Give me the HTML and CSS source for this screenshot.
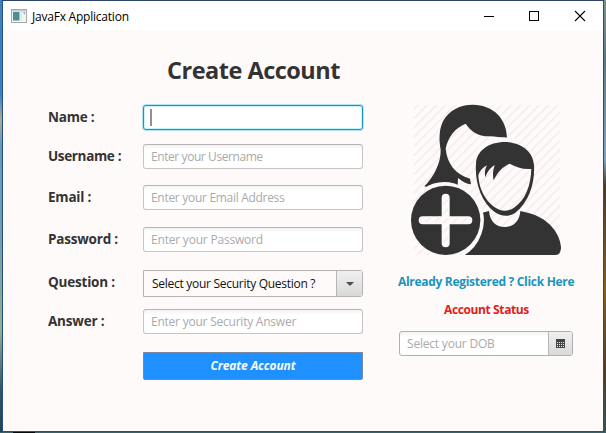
FILE: index.html
```html
<!DOCTYPE html>
<html lang="en">
<head>
<meta charset="utf-8">
<title>JavaFx Application</title>
<link rel="stylesheet" href="styles.css">
</head>
<body>
<div class="window">
  <header class="titlebar">
    <svg class="app-icon" width="16" height="14" viewBox="0 0 16 14">
      <rect x=".5" y=".5" width="15" height="13" fill="#f4f6f6" stroke="#a3abab"/>
      <rect x="1" y="1" width="14" height="1.5" fill="#c3cbcb"/>
      <rect x="2" y="3" width="6.500" height="8.500" fill="#4b8f92"/>
      <rect x="9.500" y="3" width="2" height="8.500" fill="#dfe7e7"/>
      <path d="M12 3h2v3z" fill="#9aa6a8"/>
    </svg>
    <span class="caption">JavaFx Application</span>
    <svg class="controls" width="104" height="12" viewBox="0 0 104 12">
      <path d="M0 6.500h10M45.500 1.500h9v9h-9z" fill="none" stroke="#000" shape-rendering="crispEdges"/>
      <path d="M91 1l10 10M101 1L91 11" fill="none" stroke="#000" stroke-width="1.100"/>
    </svg>
  </header>
  <main class="content">
    <form class="form">
      <h1 class="title">Create Account</h1>
      <div class="row name"><label>Name :</label><div class="field focused"><i class="caret"></i></div></div>
      <div class="row username"><label class="tight">Username :</label><div class="field"><span>Enter your Username</span></div></div>
      <div class="row email"><label>Email :</label><div class="field"><span>Enter your Email Address</span></div></div>
      <div class="row password"><label>Password :</label><div class="field"><span>Enter your Password</span></div></div>
      <div class="row question"><label>Question :</label><div class="combo"><span class="combo-text">Select your Security Question ?</span><div class="combo-arrow"><svg width="8" height="4" viewBox="0 0 8 4"><path d="M0 0h8L4 4z" fill="#4c4c4c"/></svg></div></div></div>
      <div class="row answer"><label>Answer :</label><div class="field"><span>Enter your Security Answer</span></div></div>
      <button class="submit" type="button">Create Account</button>
    </form>
    <aside class="side">
      <svg class="avatar" width="170" height="170" viewBox="0 0 510 510">
        <defs>
          <pattern id="hatch" width="28" height="28" patternUnits="userSpaceOnUse">
            <path d="M-7 35L35-7M-7 7L7-7M21 35L35 21" stroke="#f5eded" stroke-width="5"/>
          </pattern>
        </defs>
        <rect x="42" y="30" width="438" height="450" fill="url(#hatch)"/>
        <path fill="#333" d="M73 274C101 245 123 205 122 164C116 132 118 101 129 79C146 46 181 29 218 29C281 30 321 72 321 131C302 127 286 124 270 124C236 125 213 110 197 86C166 97 143 128 137 161C141 205 166 238 210 251L213 268C200 268 188 260 174 249L173 273C134 260 108 269 83 277Z"/>
        <path d="M230 175C246 145 277 131 315 132C330 132 343 135 355 140" fill="none" stroke="#fffafa" stroke-width="10"/>
        <path fill="#333" d="M180 480C216 464 244 421 247 381L244 354L267 348C270 380 288 396 314 396C341 396 359 378 361 348L386 354C438 367 479 408 483 456C483 471 477 480 467 480Z"/>
        <path fill="#333" fill-rule="evenodd" d="M228 207C229 168 265 141 315 141C367 142 400 172 402 210C405 260 390 320 345 354C324 367 302 363 283 350C243 320 224 261 228 207ZM235 240C237 289 264 331 300 345C314 350 328 347 342 338C378 314 392 270 394 222C369 224 347 216 329 206C311 213 292 231 281 256C278 242 278 229 284 211C272 217 262 230 256 247C253 233 255 222 261 211C249 217 239 228 235 240Z"/>
        <path d="M74 283C128 247 203 268 234 324C266 383 238 454 180 484" fill="none" stroke="#fffafa" stroke-width="8"/>
        <circle cx="137" cy="376" r="104" fill="#333"/>
        <path d="M137 308V445M68 376H205" fill="none" stroke="#fffafa" stroke-width="24" stroke-linecap="round"/>
        <path d="M129 329l16-16M129 357l16-16M77 381l16-16M105 381l16-16M129 385l16-16M157 385l16-16M185 385l16-16M129 413l16-16M129 441l16-16" stroke="#f5eded" stroke-width="5"/>
      </svg>
      <a class="login">Already Registered ? Click Here</a>
      <div class="status">Account Status</div>
      <div class="date">
        <span>Select your DOB</span>
        <div class="date-button"><svg width="9" height="9" viewBox="0 0 9 9"><path d="M0 0h9v9H0z" fill="#444"/><path d="M1 3h1v1H1zM3 3h1v1H3zM5 3h1v1H5zM7 3h1v1H7zM1 5h1v1H1zM3 5h1v1H3zM5 5h1v1H5zM7 5h1v1H7zM1 7h1v1H1zM3 7h1v1H3zM5 7h1v1H5zM7 7h1v1H7z" fill="#eee"/></svg></div>
      </div>
    </aside>
  </main>
</div>
</body>
</html>
```
FILE: styles.css
```css
* { box-sizing: border-box; }
body {
  margin: 0;
  height: 433px;
  padding: 0 2px;
  overflow: hidden;
  font-family: "Open Sans", "Noto Sans", sans-serif;
  font-size: 12px;
  background:
    linear-gradient(90deg, #3b606a 0 13px, #050a0c 13px 35px, #3b606a 35px) 0 100% / 100% 1px no-repeat,
    linear-gradient(#3f81c0 0 95px, #a9a9a3 120px, #6998bd 145px, #789bb0 240px, #93ad9d 330px, #365366 390px, #244052) 0 0 / 2px 100% no-repeat,
    linear-gradient(#7b9584 0, #557c88 60px, #78a8d0 160px, #493c28 185px, #8b5c1c 290px, #523d24 370px, #36545a) 100% 0 / 2px 100% no-repeat;
}
.window {
  height: 432px;
  border: 1px solid #23507e;
  border-top-color: #2b4169;
  background: #fffafa;
}
.titlebar {
  display: flex;
  align-items: center;
  height: 30px;
  padding: 0 15px 0 8px;
  background: #fff;
}
.app-icon { margin-top: -1px; }
.caption { margin-left: 5px; color: #000; font-size: 12px; letter-spacing: -.22px; white-space: nowrap; }
.controls { margin: -1px 0 0 auto; }
.content { display: flex; }
.form { width: 360px; padding-left: 45px; }
.title {
  height: 74px;
  margin: 0;
  padding: 22px 0 0 119px;
  line-height: 34px;
  font-size: 23.5px;
  font-weight: 700;
  letter-spacing: -.5px;
  color: #333;
  white-space: nowrap;
}
.row { display: flex; align-items: center; height: 25px; }
.row label {
  width: 95px;
  flex: none;
  margin-top: -1px;
  color: #333;
  font-size: 13.5px;
  font-weight: 700;
  letter-spacing: -.2px;
  white-space: nowrap;
}
.row .tight { letter-spacing: -.35px; }
.name { margin-bottom: 14px; }
.username { margin-bottom: 16px; }
.email { margin-bottom: 17px; }
.password { margin-bottom: 18px; }
.question { height: 27px; margin-bottom: 12px; }
.question label { margin-top: -3px; }
.answer { margin-bottom: 18px; }
.field, .date {
  display: flex;
  align-items: center;
  width: 220px;
  height: 25px;
  padding: 0 7px;
  border: 1px solid #c9c3c3;
  border-top-color: #b8b2b2;
  border-radius: 3px;
  background: linear-gradient(#f3f3f3, #fff 5px);
  color: #aaa;
  letter-spacing: -.23px;
  white-space: nowrap;
}
.username .field { letter-spacing: -.42px; }
.email .field { letter-spacing: -.3px; }
.password .field { letter-spacing: -.2px; }
.focused { border: 1px solid #1498bd; box-shadow: 0 0 0 1px #b2e3f4, inset 0 0 0 1px #c9f4fb; background: #fff; }
.caret { width: 2px; height: 17px; margin-left: -1px; background: #929092; }
.combo {
  display: flex;
  width: 220px;
  height: 27px;
  border: 1px solid #b8b3b3;
  border-radius: 0 3px 3px 0;
}
.combo-text { flex: 1; padding-left: 8px; color: #111; line-height: 25px; letter-spacing: -.28px; white-space: nowrap; }
.combo-arrow, .date-button {
  display: flex;
  align-items: center;
  justify-content: center;
  width: 26px;
  border-left: 1px solid #b8b5b5;
  background: linear-gradient(#f0f0f0, #d9d9d9);
}
.submit {
  display: block;
  width: 220px;
  height: 28px;
  margin-left: 95px;
  padding: 0;
  border: 1px solid #7a88a0;
  border-radius: 0 0 2px 2px;
  background: #1e90ff;
  color: #f4fbff;
  font: italic 700 12px/24px "Open Sans", "Noto Sans", sans-serif;
  letter-spacing: -.1px;
}
.side {
  display: flex;
  flex-direction: column;
  width: 176px;
  margin-left: 35px;
  padding-top: 64px;
  font-size: 12px;
}
.avatar { display: block; margin-left: 2px; }
.login, .status { height: 20px; line-height: 20px; font-weight: 700; white-space: nowrap; }
.login { margin-top: 7px; color: #1895bd; letter-spacing: -.3px; }
.status { margin: 8px 0 11px; padding-left: 46px; color: #e02119; letter-spacing: -.38px; }
.date { width: 174px; margin-left: 1px; padding-right: 0; overflow: hidden; border-color: #b4afaf; letter-spacing: -.2px; }
.date-button { width: 24px; height: 23px; margin-left: auto; }
```
